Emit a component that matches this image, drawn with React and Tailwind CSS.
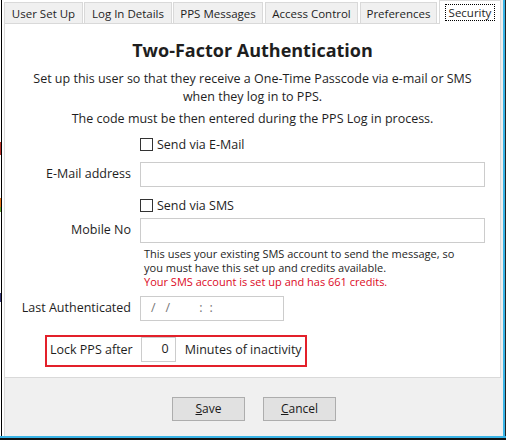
import React from 'react';

const tabs = [
  { label: 'User Set Up', w: 'w-[79px]', ml: 'ml-0' },
  { label: 'Log In Details', w: 'w-[88px]', ml: 'ml-[1px]' },
  { label: 'PPS Messages', w: 'w-[90px]', ml: 'ml-[1px]' },
  { label: 'Access Control', w: 'w-[93px]', ml: 'ml-[2px]' },
  { label: 'Preferences', w: 'w-[77px]', ml: 'ml-[2px]' },
];

const Checkbox = ({ label }) => (
  <div className="flex items-center h-[13px] ml-[135px]">
    <span className="w-[13px] h-[13px] border border-[#333333] bg-white" />
    <span className="ml-[4px] leading-[13px]">{label}</span>
  </div>
);

const FieldRow = ({ label, children, className = '' }) => (
  <div className={`flex items-center ${className}`}>
    <div className="w-[126px] text-right">{label}</div>
    <div className="ml-[9px]">{children}</div>
  </div>
);

const Button = ({ hot, rest }) => (
  <button className="w-[73px] h-[24px] bg-[#e1e1e1] border border-[#adadad] text-[12px] text-[#1a1a1a]">
    <span className="underline">{hot}</span>
    {rest}
  </button>
);

export default function App() {
  return (
    <div className="w-[506px] h-[440px] flex flex-col bg-white overflow-hidden font-['Open_Sans',sans-serif] text-[12.5px] text-[#1e1e1e]">
      <div className="flex flex-1 min-h-0">
        {/* window edge, bits of the app behind */}
        <div className="w-[1px] flex flex-col">
          <div className="h-[142px]" />
          <div className="h-[13px] bg-[#b8322b]" />
          <div className="h-[43px]" />
          <div className="h-[9px] bg-[#e8741c]" />
          <div className="h-[5px] bg-[#6aab3a]" />
          <div className="h-[81px]" />
          <div className="h-[9px] bg-[#3a3a78]" />
        </div>
        <div className="w-[1px] bg-black" />
        <div className="w-[2px] bg-white" />

        <div className="w-[497px] flex flex-col">
          {/* tab strip */}
          <div className="h-[23px] flex items-end bg-white text-[11.5px]">
            {tabs.map((t) => (
              <div
                key={t.label}
                className={`${t.w} ${t.ml} h-[21px] bg-[#f0f0f0] border border-b-0 border-[#d9d9d9] flex items-center justify-center pt-[1px]`}
              >
                {t.label}
              </div>
            ))}
            <div className="relative z-10 w-[62px] ml-[2px] h-[24px] -mb-[1px] bg-white border border-b-0 border-[#d9d9d9] flex items-start justify-center pt-[3px]">
              <span className="border border-dotted border-black px-[3px] leading-[15px]">Security</span>
            </div>
          </div>

          {/* tab page */}
          <div className="h-[355px] bg-white border border-[#d9d9d9] flex flex-col">
            <h1 className="mt-[12px] h-[28px] leading-[28px] text-center text-[18px] font-bold text-[#1e1e1e]">
              Two-Factor Authentication
            </h1>
            <div className="mt-[6px] text-center leading-[18px]">
              <p>Set up this user so that they receive a One-Time Passcode via e-mail or SMS</p>
              <p>when they log in to PPS.</p>
              <p className="mt-[4px]">The code must be then entered during the PPS Log in process.</p>
            </div>

            <div className="mt-[10px]">
              <Checkbox label="Send via E-Mail" />
            </div>
            <FieldRow label="E-Mail address" className="mt-[11px]">
              <div className="w-[345px] h-[25px] border border-[#cccccc] bg-white" />
            </FieldRow>

            <div className="mt-[12px]">
              <Checkbox label="Send via SMS" />
            </div>
            <FieldRow label="Mobile No" className="mt-[6px]">
              <div className="w-[345px] h-[25px] border border-[#cccccc] bg-white" />
            </FieldRow>

            <div className="mt-[4px] ml-[139px] text-[11px] leading-[14px]">
              <p>This uses your existing SMS account to send the message, so</p>
              <p>you must have this set up and credits available.</p>
              <p className="text-[#dc0a1e]">Your SMS account is set up and has 661 credits.</p>
            </div>

            <FieldRow label="Last Authenticated" className="mt-[7px]">
              <div className="w-[144px] h-[25px] border border-[#cccccc] bg-white flex items-center text-[#777777] pl-[10px]">
                <span>/</span>
                <span className="ml-[10px]">/</span>
                <span className="ml-[29px]">:</span>
                <span className="ml-[7px]">:</span>
              </div>
            </FieldRow>

            <div className="mt-[14px] ml-[40px] w-[262px] h-[32px] border-2 border-[#e3202a] flex items-start">
              <span className="ml-[3px] mt-[4px] leading-[18px]">Lock PPS after</span>
              <div className="ml-[8px] w-[35px] h-[25px] border border-[#cccccc] bg-white flex items-center justify-end pr-[6px]">
                0
              </div>
              <span className="ml-[9px] mt-[4px] leading-[18px]">Minutes of inactivity</span>
            </div>
          </div>

          {/* footer */}
          <div className="flex-1 bg-[#f0f0f0] border-l border-[#d9d9d9] flex justify-center gap-[18px] pt-[19px] pl-[2px]">
            <Button hot="S" rest="ave" />
            <Button hot="C" rest="ancel" />
          </div>
        </div>

        <div className="w-[2px] bg-[#eeeeee]" />
        <div className="w-[2px] bg-[#3ab4e6]" />
        <div className="w-[1px] bg-[#222222]" />
      </div>
      <div className="h-[2px] bg-[#3ab4e6]" />
      <div className="h-[2px] bg-[#111111]" />
    </div>
  );
}
